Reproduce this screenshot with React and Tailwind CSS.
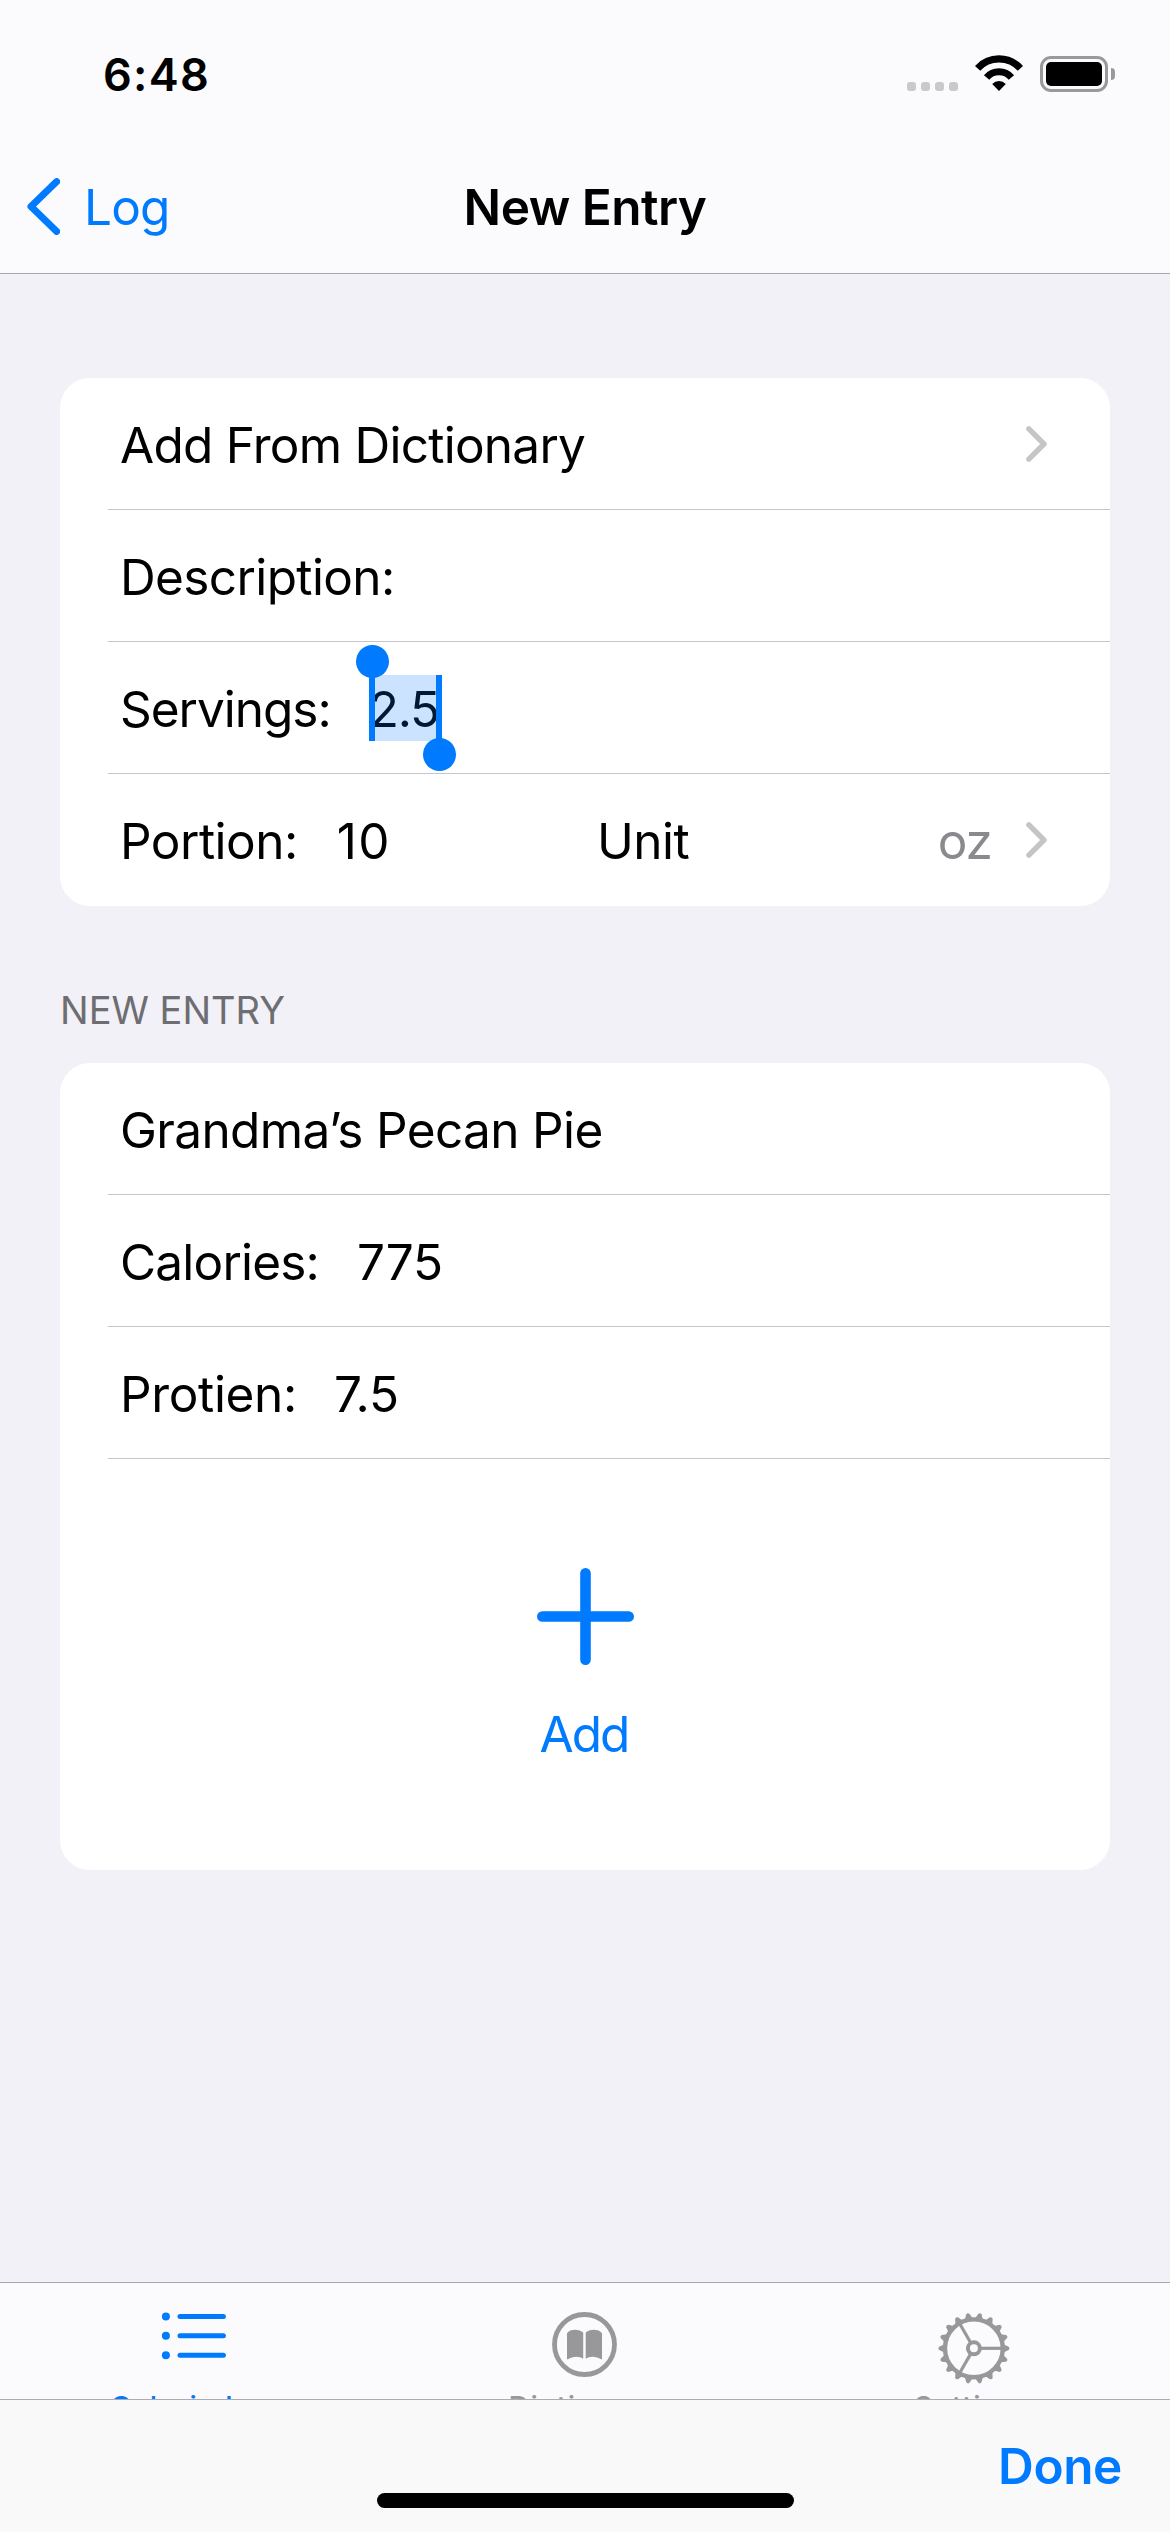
import React from "react";

const GEAR_TEETH = Array.from({ length: 18 }, (_, i) => i * 20);

function WifiIcon() {
  return (
    <svg width="48" height="36" viewBox="0 0 48 36" fill="none">
      <path d="M2.6 13.4A29 29 0 0 1 45.4 13.4" stroke="#000" strokeWidth="7.2" />
      <path d="M11.6 22.4A16.3 16.3 0 0 1 36.4 22.4" stroke="#000" strokeWidth="7" />
      <path d="M24 36L17.2 28.9A9.6 9.6 0 0 1 30.8 28.9Z" fill="#000" />
    </svg>
  );
}

function StatusBar() {
  return (
    <div className="flex h-[148px] items-center justify-between pl-[103px] pr-[55px]">
      <span className="text-[45px] font-semibold leading-none tracking-[1.3px]">6:48</span>
      <div className="flex items-center">
        <div className="mt-[25px] flex gap-[5px]">
          <i className="size-[9px] rounded-[3px] bg-[#c9c9ca]" />
          <i className="size-[9px] rounded-[3px] bg-[#c9c9ca]" />
          <i className="size-[9px] rounded-[3px] bg-[#c9c9ca]" />
          <i className="size-[9px] rounded-[3px] bg-[#c9c9ca]" />
        </div>
        <div className="ml-[17px] mr-[17px] -mt-0.5">
          <WifiIcon />
        </div>
        <div className="h-9 w-[68px] rounded-[11px] border-[3px] border-[#99999b] p-[3px]">
          <div className="h-full w-full rounded-[5px] bg-black" />
        </div>
        <div className="ml-[3px] h-3 w-1 rounded-r-full bg-[#99999b]" />
      </div>
    </div>
  );
}

function NavBar() {
  return (
    <div className="grid h-[125px] grid-cols-3 items-center pb-[7px] leading-[50px]">
      <div className="flex items-center pl-[27px] text-[#007aff]">
        <svg className="-mt-px" width="33" height="57" viewBox="0 0 33 57" fill="none">
          <path d="M29.7 3.6L4 28.5L29.7 53.4" stroke="currentColor" strokeWidth="7" strokeLinecap="round" strokeLinejoin="round" />
        </svg>
        <span className="ml-6 text-[49.5px] tracking-[-0.83px]">Log</span>
      </div>
      <h1 className="whitespace-nowrap text-center text-[49.5px] font-semibold tracking-[-0.5px]">New Entry</h1>
    </div>
  );
}

function Chevron() {
  return (
    <svg className="-mt-0.5 mr-[63px]" width="21" height="36" viewBox="0 0 21 36" fill="none">
      <path d="M2.9 2.9L18 18L2.9 33.1" stroke="#c5c5c7" strokeWidth="5.4" strokeLinecap="round" strokeLinejoin="round" />
    </svg>
  );
}

function Row({ last, children }) {
  return (
    <div
      className={
        "ml-12 flex h-[132px] items-center pl-3 leading-[50px] " +
        (last ? "pt-0.5" : "border-b border-[#c6c6c8] pt-[3px]")
      }
    >
      {children}
    </div>
  );
}

function SelectedValue() {
  return (
    <div className="relative -mt-0.5 ml-[38px] flex h-[66px] w-[73px] items-center bg-[#cce3ff] pt-0.5">
      <span className="whitespace-nowrap tracking-[-1.3px] text-[#001833]">2.5</span>
      <i className="absolute left-0 top-0 h-full w-1.5 bg-[#007aff]" />
      <i className="absolute right-0 top-0 h-full w-1.5 bg-[#007aff]" />
      <i className="absolute -left-[13px] -top-[30px] size-[33px] rounded-full bg-[#007aff]" />
      <i className="absolute -bottom-[30px] -right-[14px] size-[33px] rounded-full bg-[#007aff]" />
    </div>
  );
}

function ListIcon() {
  return (
    <svg width="80" height="80" viewBox="0 0 80 80" stroke="#007aff" fill="#007aff">
      {[11.4, 30.8, 50.2].map((y) => (
        <g key={y}>
          <circle cx="10.9" cy={y} r="4" stroke="none" />
          <path d={`M25 ${y}H68.4`} strokeWidth="5" strokeLinecap="round" />
        </g>
      ))}
    </svg>
  );
}

function BookIcon() {
  return (
    <svg width="80" height="80" viewBox="0 0 80 80" fill="#98989a">
      <circle cx="39.5" cy="39.5" r="30" fill="none" stroke="#98989a" strokeWidth="4.8" />
      <path d="M22 28.2C25 23.6 34.5 23.6 38.2 27.6V53.8C34.5 51 27.5 51 23 54.3Q22 54.6 22 53.4Z" />
      <path d="M57 28.2C54 23.6 44.3 23.6 40.7 27.6V53.8C44.3 51 51.5 51 56 54.3Q57 54.6 57 53.4Z" />
    </svg>
  );
}

function GearIcon() {
  return (
    <svg width="80" height="80" viewBox="0 0 80 80" fill="none" stroke="#98989a">
      <g transform="translate(38.9 43.3)">
        <circle r="28.9" strokeWidth="4.4" />
        <circle r="6" strokeWidth="4" />
        {[0, 120, 240].map((a) => (
          <path key={a} d="M7 0H28" strokeWidth="3.2" transform={`rotate(${a})`} />
        ))}
        {GEAR_TEETH.map((a) => (
          <path key={a} d="M30 -3.9L34.8 -1.6Q36.4 0 34.8 1.6L30 3.9Z" fill="#98989a" stroke="none" transform={`rotate(${a})`} />
        ))}
      </g>
    </svg>
  );
}

function Tab({ icon, label, active }) {
  return (
    <div className={"flex flex-col items-center pt-[22px] " + (active ? "text-[#007aff]" : "text-[#98989a]")}>
      {icon}
      <span className="mt-1 text-[29px] font-medium leading-[36px] tracking-[1.1px]">{label}</span>
    </div>
  );
}

export default function App() {
  return (
    <div className="flex h-[2532px] w-[1170px] flex-col overflow-hidden bg-[#f2f1f7] font-['Inter',sans-serif] text-[49.5px] text-black">
      <header className="h-[274px] shrink-0 border-b border-[#a9a9ad] bg-[#fbfbfd]">
        <StatusBar />
        <NavBar />
      </header>

      <main className="flex-1 px-[60px] pt-[104px]">
        <section className="rounded-[30px] bg-white">
          <Row>
            <span className="flex-1 tracking-[-0.75px]">Add From Dictionary</span>
            <Chevron />
          </Row>
          <Row>
            <span className="tracking-[-0.62px]">Description:</span>
          </Row>
          <Row>
            <span className="tracking-[-1.01px]">Servings:</span>
            <SelectedValue />
          </Row>
          <Row last>
            <div className="flex w-[477px]">
              <span className="tracking-[-0.51px]">Portion:</span>
              <span className="ml-[39px] tracking-[1.4px]">10</span>
            </div>
            <span className="flex-1 tracking-[-0.52px]">Unit</span>
            <span className="mr-[34px] tracking-[-0.96px] text-[#8a8a8e]">oz</span>
            <Chevron />
          </Row>
        </section>

        <h2 className="flex h-[157px] items-center pt-[51px] text-[38px] leading-none text-[#6d6d72]">NEW ENTRY</h2>

        <section className="h-[807px] rounded-[30px] bg-white">
          <Row>
            <span className="tracking-[-0.63px]">Grandma’s Pecan Pie</span>
          </Row>
          <Row>
            <span className="tracking-[-0.81px]">Calories:</span>
            <span className="ml-[38px] tracking-[-0.25px]">775</span>
          </Row>
          <Row>
            <span className="tracking-[-0.34px]">Protien:</span>
            <span className="ml-[37px] tracking-[-0.19px]">7.5</span>
          </Row>
          <div className="flex flex-col items-center pt-[109px] text-[#007aff]">
            <svg width="97" height="97" viewBox="0 0 97 97" fill="none">
              <path d="M48.5 5.3V91.7M5.3 48.5H91.7" stroke="currentColor" strokeWidth="10.6" strokeLinecap="round" />
            </svg>
            <span className="mt-[39px] pr-0.5 leading-[60px] tracking-[-1.9px]">Add</span>
          </div>
        </section>
      </main>

      <nav className="grid h-[117px] shrink-0 grid-cols-3 overflow-hidden border-t border-[#a9a9ad] bg-[#fbfbfd]">
        <Tab icon={<ListIcon />} label="Calorie Log" active />
        <Tab icon={<BookIcon />} label="Dictionary" />
        <Tab icon={<GearIcon />} label="Settings" />
      </nav>

      <footer className="relative flex h-[133px] shrink-0 items-center justify-end border-t border-[#adadaf] bg-[#f9f9f9] pr-12">
        <span className="font-semibold leading-[50px] tracking-[-0.39px] text-[#007aff]">Done</span>
        <i className="absolute bottom-6 left-[377px] h-[15px] w-[417px] rounded-full bg-black" />
      </footer>
    </div>
  );
}
